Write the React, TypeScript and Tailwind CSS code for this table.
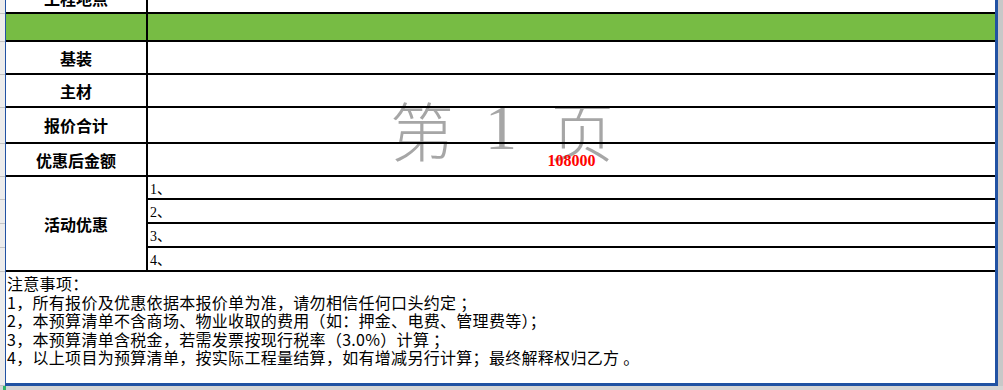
const cjk = "font-['Noto_Sans_CJK_SC',sans-serif]";

const stripRows = [14, 28, 33, 33, 36, 33, 23, 24, 24, 24, 114];

const notes = [
  "注意事项：",
  "1，所有报价及优惠依据本报价单为准，请勿相信任何口头约定 ；",
  "2，本预算清单不含商场、物业收取的费用（如：押金、电费、管理费等）；",
  "3，本预算清单含税金，若需发票按现行税率（3.0%）计算 ；",
  "4，以上项目为预算清单，按实际工程量结算，如有增减另行计算；最终解释权归乙方 。",
];

function Row({
  h,
  label,
  children,
  green,
}: {
  h: string;
  label?: React.ReactNode;
  children?: React.ReactNode;
  green?: boolean;
}) {
  return (
    <div className={`flex ${h} border-b-2 border-black ${green ? "bg-[#77bc44]" : ""}`}>
      <div className="w-[142px] shrink-0 border-r-2 border-black flex items-center justify-center text-[16px] font-bold text-black">
        {label}
      </div>
      <div className="flex-1 flex items-center justify-center">{children}</div>
    </div>
  );
}

export default function App() {
  return (
    <div className="w-[1003px] h-[390px] flex flex-col bg-[#d4d4d4] overflow-hidden">
      <div className="flex h-[386px]">
        <div className="w-[5px] shrink-0 flex flex-col bg-[#ececec]">
          {stripRows.map((h, i) => (
            <div key={i} className="border-b border-[#c4c4c4] shrink-0" style={{ height: h }} />
          ))}
        </div>

        <div className={`relative w-[993px] shrink-0 bg-white border-l border-[#2152a3] border-r-[3px] border-b-[3px] ${cjk}`}>
          {/* page watermark, sits behind the grid lines */}
          <div className="absolute left-[384px] top-[96px] flex items-start text-[64px] leading-none text-[#a6a6a6] font-light pointer-events-none">
            <span>第</span>
            <span className="ml-[31px] font-['Liberation_Serif',serif] font-normal">1</span>
            <span className="ml-[33px]">页</span>
          </div>

          <div className="relative flex flex-col">
            <div className="flex h-[14px] border-b-2 border-black overflow-hidden">
              <div className="w-[142px] shrink-0 border-r-2 border-black text-center text-[16px] leading-[16px] font-bold -mt-[10px]">
                工程地点
              </div>
              <div className="flex-1" />
            </div>

            <Row h="h-[28px]" green />
            <Row h="h-[33px]" label="基装" />
            <Row h="h-[33px]" label="主材" />
            <Row h="h-[36px]" label="报价合计" />
            <Row h="h-[33px]" label="优惠后金额">
              <span className="font-['Liberation_Serif',serif] font-bold text-[16px] text-[#ff0000] pt-[2px]">
                108000
              </span>
            </Row>

            <div className="flex h-[95px]">
              <div className="w-[142px] shrink-0 border-r-2 border-b-2 border-black flex items-center justify-center text-[16px] font-bold">
                活动优惠
              </div>
              <div className="flex-1 flex flex-col">
                {["h-[23px]", "h-[24px]", "h-[24px]", "h-[24px]"].map((h, i) => (
                  <div
                    key={i}
                    className={`${h} border-b-2 border-black flex items-center pl-[2px] pt-[3px] text-[14px] font-['Liberation_Serif','Noto_Sans_CJK_SC',serif]`}
                  >
                    {i + 1}、
                  </div>
                ))}
              </div>
            </div>

            <div className="h-[111px] px-[1px] pt-[2px] text-[16px] leading-[18.6px] tracking-[0.3px] text-black">
              {notes.map((n, i) => (
                <div key={i} className="whitespace-pre">
                  {n}
                </div>
              ))}
            </div>
          </div>
        </div>

        <div className="w-[5px] shrink-0 bg-[#c8c8c8]" />
      </div>
      <div className="h-[4px] flex">
        <div className="w-[3px]" />
        <div className="w-[3px] bg-[#2fb36b]" />
      </div>
    </div>
  );
}
